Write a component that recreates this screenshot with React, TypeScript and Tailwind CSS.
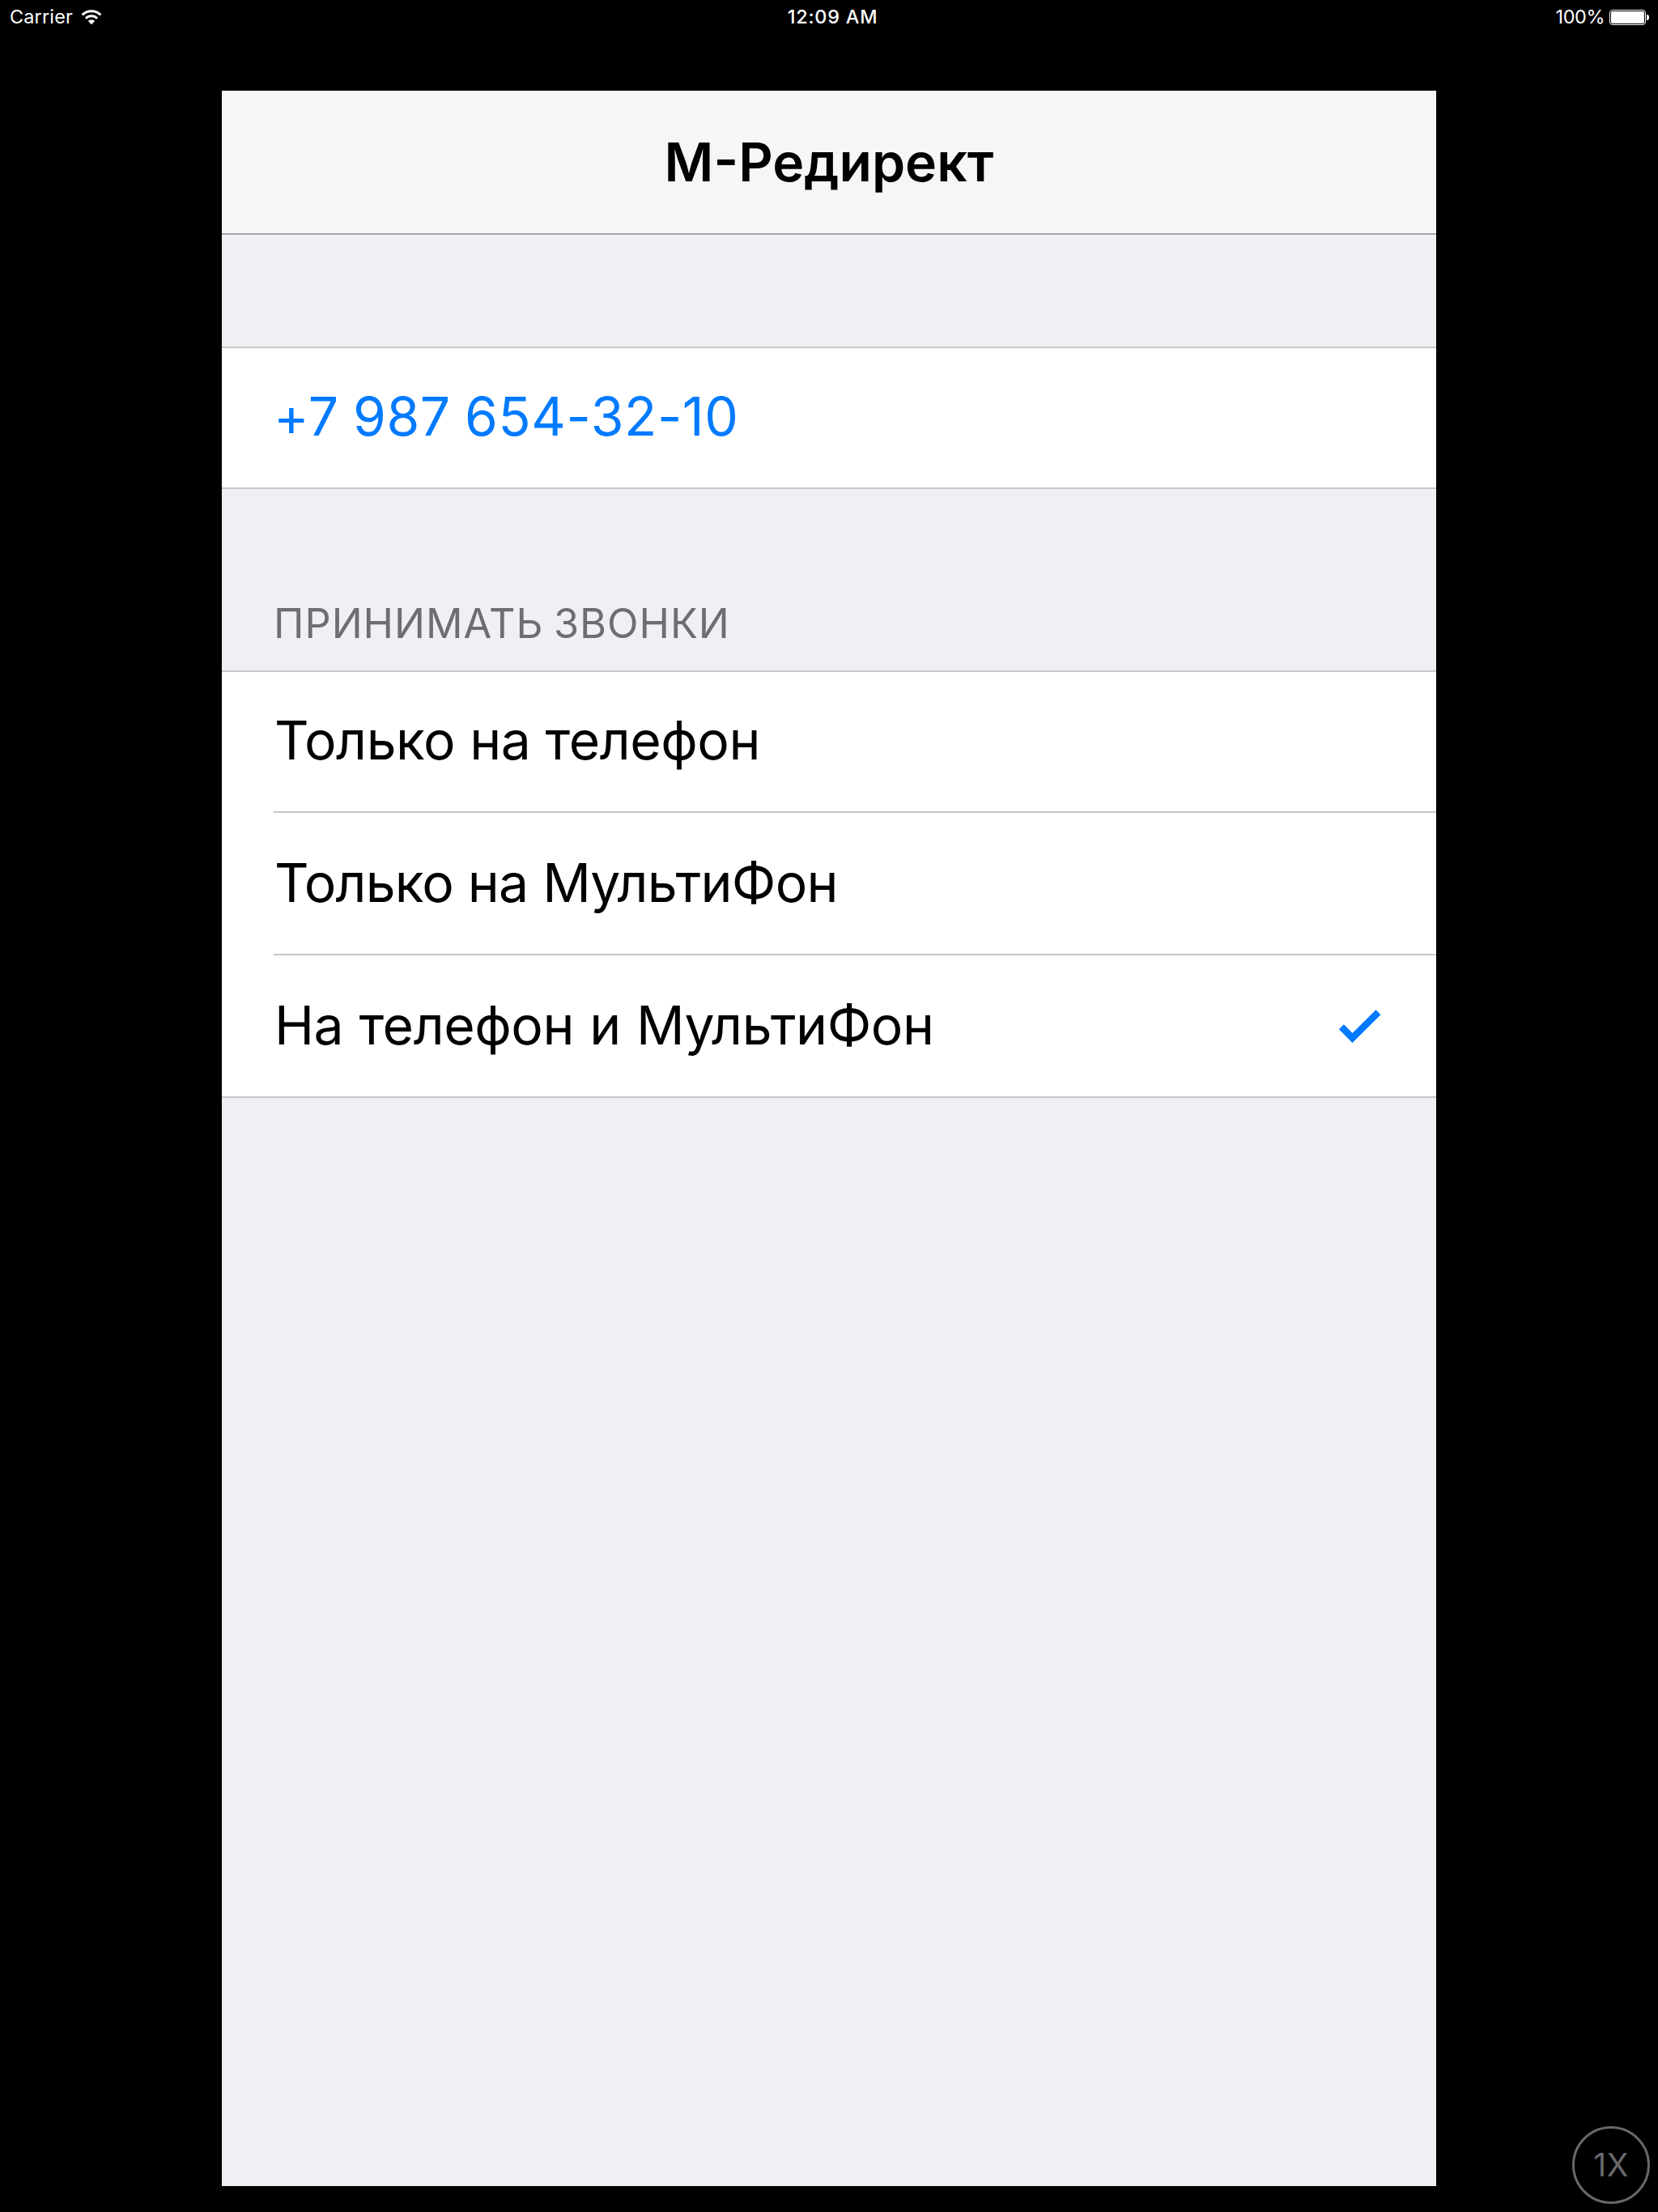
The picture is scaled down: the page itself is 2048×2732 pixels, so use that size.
const options = [
  { label: "Только на телефон", text: "tracking-[-0.45px] pb-1", selected: false },
  { label: "Только на МультиФон", text: "tracking-[-0.78px] pb-0.5", selected: false },
  { label: "На телефон и МультиФон", text: "tracking-[-0.45px] [word-spacing:1.1px] pb-0.5", selected: true },
];

function WifiIcon() {
  return (
    <svg className="ml-[10px] block" width="26" height="20" viewBox="0 0 26 20" fill="none" stroke="#fff" strokeWidth="3">
      <path d="M1.6 7.4a16.2 16.2 0 0 1 22.8 0" />
      <path d="M5.9 11.7a10.1 10.1 0 0 1 14.2 0" />
      <path d="M13 19.2l-4.2-4.2a6 6 0 0 1 8.4 0z" fill="#fff" stroke="none" />
    </svg>
  );
}

function StatusBar() {
  return (
    <header className="grid h-10 grid-cols-3 items-center text-[23.4px] leading-10 text-white">
      <div className="flex items-center pl-3">
        <span className="pt-px tracking-[0.2px]">Carrier</span>
        <WifiIcon />
      </div>
      <div className="pt-px pl-[9px] text-center font-medium tracking-[0.8px]">12:09 AM</div>
      <div className="flex items-center justify-end pt-px pr-[11px]">
        <span className="tracking-[-0.4px]">100%</span>
        <div className="ml-[6px] h-[19px] w-[45px] rounded-[4px] border border-white p-px">
          <div className="h-full w-full rounded-[2px] bg-white" />
        </div>
        <div className="ml-px h-[7px] w-[3px] rounded-r-[3px] bg-white" />
      </div>
    </header>
  );
}

function CheckIcon() {
  return (
    <svg width="52" height="41" viewBox="0 0 52 41" fill="none" stroke="#007aff" strokeWidth="8.5">
      <path d="M2.9 21.2L16.5 35L48.5 3.2" />
    </svg>
  );
}

export default function App() {
  return (
    <div className="relative h-[2732px] w-[2048px] overflow-hidden bg-black font-[Inter,sans-serif]">
      <StatusBar />
      <main className="mx-auto mt-[72px] h-[2588px] w-[1500px] bg-[#efeff4] text-[66px]">
        <h1 className="flex h-[178px] items-center justify-center border-b-2 border-[#a7a7aa] bg-[#f6f6f7] font-semibold">
          М-Редирект
        </h1>
        <section className="mt-[138px] flex h-[176px] items-center border-y-2 border-[#c8c7cc] bg-white pb-1 pl-16 tracking-[0.6px] text-[#007aff] [word-spacing:-2px]">
          +7 987 654-32-10
        </section>
        <h2 className="flex h-[224px] items-end pb-[28px] pl-16 text-[50.4px] leading-[60px] tracking-[1px] text-[#6d6d72] [word-spacing:-2.5px]">
          ПРИНИМАТЬ ЗВОНКИ
        </h2>
        <ul className="border-y-2 border-[#c8c7cc] bg-white pl-16 text-black">
          {options.map((o) => (
            <li
              key={o.label}
              className="flex h-[174px] items-center justify-between border-b-2 border-[#c8c7cc] pr-[68px] pl-px last:border-b-0 [&:not(:first-child):not(:last-child)]:h-[176px]"
            >
              <span className={o.text}>{o.label}</span>
              {o.selected && <CheckIcon />}
            </li>
          ))}
        </ul>
      </main>
      <button className="absolute right-[10px] bottom-[10px] flex h-24 w-24 items-center justify-center rounded-full border-[3px] border-[#68686c] text-[39px] tracking-[0.5px] text-[#68686c]">
        1X
      </button>
    </div>
  );
}
